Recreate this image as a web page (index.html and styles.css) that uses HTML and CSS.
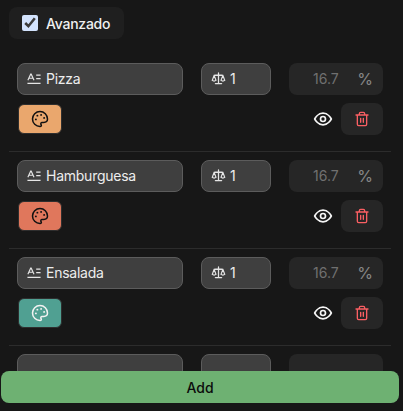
FILE: index.html
```html
<!DOCTYPE html>
<html lang="es">
<head>
<meta charset="utf-8">
<title>Avanzado</title>
<link rel="stylesheet" href="styles.css">
</head>
<body>
<svg class="defs" width="0" height="0">
  <defs>
    <symbol id="i-text" viewBox="0 0 16 16"><path d="M1 9.500 4.200 2.500h.6L8 9.500M2 7.200h5.200M10.500 3.500h5M10.500 7.500h5M.5 13h15" fill="none" stroke="currentColor" stroke-width="1.300"/></symbol>
    <symbol id="i-scale" viewBox="0 0 24 24"><path d="M12 3v17M7 20h10M5 7h14M5 7c1-.5 4 0 7-1 3 1 6 .5 7 1M2 15l3-8 3 8c-.9.7-1.900 1-3 1s-2.100-.3-3-1ZM16 15l3-8 3 8c-.9.7-1.900 1-3 1s-2.100-.3-3-1Z" fill="none" stroke="currentColor" stroke-width="2" stroke-linecap="round" stroke-linejoin="round"/></symbol>
    <symbol id="i-palette" viewBox="0 0 24 24"><path d="M12 22a10 10 0 1 1 10-10c0 2.800-2.200 4.500-5 4.500h-2.200a1.800 1.800 0 0 0-1.300 3c.7.900.2 2.500-1.500 2.500Z" fill="none" stroke="currentColor" stroke-width="2" stroke-linejoin="round"/><circle cx="13.500" cy="6.500" r="1.300" fill="currentColor"/><circle cx="17.500" cy="10.500" r="1.300" fill="currentColor"/><circle cx="8.500" cy="7.500" r="1.300" fill="currentColor"/><circle cx="6.500" cy="12.500" r="1.300" fill="currentColor"/></symbol>
    <symbol id="i-eye" viewBox="0 0 24 24"><path d="M2 12s3.600-7 10-7 10 7 10 7-3.600 7-10 7-10-7-10-7Z" fill="none" stroke="currentColor" stroke-width="2" stroke-linejoin="round"/><circle cx="12" cy="12" r="3" fill="none" stroke="currentColor" stroke-width="2"/></symbol>
    <symbol id="i-trash" viewBox="0 0 24 24"><path d="M3 6h18M19 6v14a2 2 0 0 1-2 2H7a2 2 0 0 1-2-2V6M8 6V4a2 2 0 0 1 2-2h4a2 2 0 0 1 2 2v2M10 11v6M14 11v6" fill="none" stroke="currentColor" stroke-width="2" stroke-linecap="round" stroke-linejoin="round"/></symbol>
  </defs>
</svg>
<main class="page">
  <label class="advanced">
    <input class="check" type="checkbox" checked>
    <span>Avanzado</span>
  </label>
  <section class="list">
    <article class="row">
      <div class="line">
        <div class="field name"><svg class="ic-text"><use href="#i-text"/></svg><span>Pizza</span></div>
        <div class="field weight"><svg class="ic-scale"><use href="#i-scale"/></svg><span>1</span></div>
        <div class="percent"><span class="num">16.7</span><span class="pct">%</span></div>
      </div>
      <div class="line second">
        <button class="swatch orange"><svg class="ic-palette"><use href="#i-palette"/></svg></button>
        <svg class="ic-eye"><use href="#i-eye"/></svg>
        <button class="del"><svg class="ic-trash"><use href="#i-trash"/></svg></button>
      </div>
    </article>
    <article class="row">
      <div class="line">
        <div class="field name"><svg class="ic-text"><use href="#i-text"/></svg><span>Hamburguesa</span></div>
        <div class="field weight"><svg class="ic-scale"><use href="#i-scale"/></svg><span>1</span></div>
        <div class="percent"><span class="num">16.7</span><span class="pct">%</span></div>
      </div>
      <div class="line second">
        <button class="swatch red"><svg class="ic-palette"><use href="#i-palette"/></svg></button>
        <svg class="ic-eye"><use href="#i-eye"/></svg>
        <button class="del"><svg class="ic-trash"><use href="#i-trash"/></svg></button>
      </div>
    </article>
    <article class="row">
      <div class="line">
        <div class="field name"><svg class="ic-text"><use href="#i-text"/></svg><span>Ensalada</span></div>
        <div class="field weight"><svg class="ic-scale"><use href="#i-scale"/></svg><span>1</span></div>
        <div class="percent"><span class="num">16.7</span><span class="pct">%</span></div>
      </div>
      <div class="line second">
        <button class="swatch teal"><svg class="ic-palette light"><use href="#i-palette"/></svg></button>
        <svg class="ic-eye"><use href="#i-eye"/></svg>
        <button class="del"><svg class="ic-trash"><use href="#i-trash"/></svg></button>
      </div>
    </article>
    <article class="row last">
      <div class="line">
        <div class="field name"></div>
        <div class="field weight"></div>
        <div class="percent"></div>
      </div>
    </article>
  </section>
</main>
<button class="add">Add</button>
</body>
</html>
```
FILE: styles.css
```css
* { box-sizing: border-box; }
html, body { margin: 0; height: 100%; overflow: hidden; background: #171717; }
body { font-family: Inter, "Liberation Sans", sans-serif; color: #f0f0f0; position: relative; }
.defs { position: absolute; }
.page { height: 411px; overflow: hidden; padding: 7px 12px 0 9px; }
.advanced {
  display: inline-flex; align-items: center; gap: 8px;
  width: 115px; height: 32px; padding: 0 13px;
  background: #1f1f1f; border-radius: 8px;
  font-size: 14px; font-weight: 500; letter-spacing: -0.25px;
}
.check { width: 16px; height: 16px; margin: 0; accent-color: #d3e3fd; }
.list { margin-top: 12px; }
.row { padding: 8px 8px 16px; border-bottom: 1px solid #2c2c2c; height: 97px; }
.row:first-child { padding-top: 12px; height: 101px; }
.row.last { border-bottom: 0; height: 40px; }
.line { display: flex; align-items: center; }
.second { margin-top: 8px; height: 32px; }
.field {
  display: flex; align-items: center; height: 32px; padding-bottom: 1px;
  background: #3f3f3f; border: 1px solid #5c5c5c; border-radius: 8px;
  font-size: 14px; letter-spacing: -0.25px; color: #ededed;
}
.name { width: 166px; padding-left: 9px; gap: 5px; }
.weight { width: 70px; margin-left: 18px; padding-left: 9px; gap: 4px; }
.percent {
  display: flex; align-items: center; justify-content: space-between;
  width: 94px; height: 32px; margin-left: 18px; padding: 0 10px 1px 24px;
  background: #262626; border-radius: 8px; font-size: 14px; color: #707070;
}
.pct { font-size: 16px; color: #868686; }
.ic-text { width: 14px; height: 14px; color: #e5e5e5; }
.ic-scale { width: 15px; height: 15px; color: #e5e5e5; }
.swatch {
  display: flex; align-items: center; justify-content: center;
  width: 44px; height: 30px; margin-left: 1px; padding: 0;
  border: 1px solid #2e2e2e; border-radius: 6px; color: #111;
}
.orange { background: #eaa76d; }
.red { background: #e0775c; }
.teal { background: #50a092; }
.ic-palette { width: 18px; height: 18px; }
.ic-palette.light { color: #f2f2f2; }
.ic-eye { width: 20px; height: 20px; margin-left: auto; color: #f5f5f5; }
.del {
  display: flex; align-items: center; justify-content: center;
  width: 42px; height: 32px; margin-left: 8px; padding: 0;
  background: #262626; border: 0; border-radius: 8px; color: #fa5f63;
}
.ic-trash { width: 16px; height: 16px; }
.add {
  position: absolute; left: 1px; top: 371px; width: 398px; height: 32px;
  background: #6eb172; border: 0; border-radius: 8px;
  font: 500 14px Inter, "Liberation Sans", sans-serif; color: #0c0c0c;
}
```
